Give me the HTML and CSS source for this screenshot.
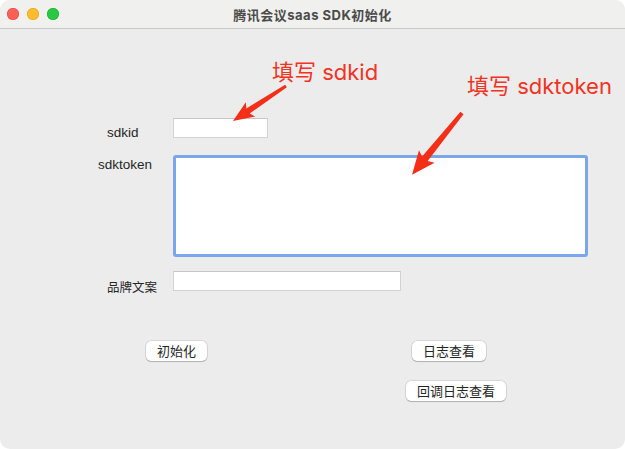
FILE: index.html
```html
<!DOCTYPE html>
<html lang="zh">
<head>
<meta charset="utf-8">
<title>腾讯会议saas SDK初始化</title>
<link rel="stylesheet" href="styles.css">
</head>
<body>
<div class="window">
  <header class="titlebar">
    <div class="lights">
      <span class="light light-close"></span>
      <span class="light light-min"></span>
      <span class="light light-max"></span>
    </div>
    <div class="title">腾讯会议saas SDK初始化</div>
    <div class="spacer"></div>
  </header>
  <main class="form">
    <div class="row row-id">
      <label class="label label-id">sdkid</label>
      <input class="field field-id" type="text">
    </div>
    <div class="row row-token">
      <label class="label label-token">sdktoken</label>
      <textarea class="area"></textarea>
    </div>
    <div class="row row-brand">
      <label class="label label-brand">品牌文案</label>
      <input class="field field-brand" type="text">
    </div>
    <div class="buttons buttons-main">
      <button class="btn">初始化</button>
      <button class="btn btn-log">日志查看</button>
    </div>
    <div class="buttons buttons-cb">
      <button class="btn">回调日志查看</button>
    </div>
  </main>
  <div class="note note-id">填写 sdkid</div>
  <div class="note note-token">填写 sdktoken</div>
  <svg class="arrows" width="625" height="449" viewBox="0 0 625 449">
    <path class="arrow" transform="translate(286 86) rotate(146.6)" d="M0,-1.6 L45.5,-3 L42.5,-8.5 L63.5,0 L42.5,8.5 L45.5,3 L0,1.6 Z"/>
    <path class="arrow" transform="translate(462 113) rotate(129)" d="M0,-2 L59,-3.6 L56,-10 L79.4,0 L56,10 L59,3.6 L0,2 Z"/>
  </svg>
</div>
</body>
</html>
```

FILE: styles.css
```css
* { box-sizing: border-box; }

html, body {
  margin: 0;
  padding: 0;
  background: #ffffff;
}

.window {
  position: relative;
  width: 625px;
  height: 449px;
  border-radius: 10px;
  background: #ececec;
  overflow: hidden;
  font-family: "Liberation Sans", "Noto Sans CJK SC", sans-serif;
  color: #262626;
}

.titlebar {
  height: 29px;
  display: grid;
  grid-template-columns: 1fr auto 1fr;
  align-items: center;
  background: #f0f0ee;
  border-bottom: 1px solid #c8c8c8;
}

.lights {
  display: flex;
  gap: 8px;
  padding-left: 7px;
}

.light {
  width: 12px;
  height: 12px;
  border-radius: 50%;
}
.light-close { background: #fe5f57; box-shadow: inset 0 0 0 0.5px #e2463f; }
.light-min { background: #febc2e; box-shadow: inset 0 0 0 0.5px #e1a116; }
.light-max { background: #28c840; box-shadow: inset 0 0 0 0.5px #1aab29; }

.title {
  font-family: "Inter", "Noto Sans CJK SC", sans-serif;
  font-weight: 700;
  font-size: 13px;
  letter-spacing: 0.5px;
  color: #4b4b4b;
}

.form {
  padding-top: 89px;
}

.row {
  display: flex;
  align-items: flex-start;
}

.row-token { margin-top: 17px; }
.row-brand { margin-top: 14px; }

.label {
  width: 173px;
  height: 20px;
  font-size: 13.5px;
  line-height: 16px;
  color: #262626;
  white-space: nowrap;
}
.label-id { padding-left: 107px; padding-top: 7px; }
.label-token { padding-left: 98px; padding-top: 2px; }
.label-brand { padding-left: 107px; padding-top: 8px; font-family: "Noto Sans CJK SC", sans-serif; font-size: 12.5px; }

.field {
  height: 20px;
  margin: 0;
  padding: 0 3px;
  background: #ffffff;
  border: 1px solid #d3d3d3;
  border-top-color: #c6c6c6;
  border-radius: 0;
  outline: none;
  font-size: 13px;
}
.field-id { width: 95px; }
.field-brand { width: 228px; }

.area {
  display: block;
  width: 415px;
  height: 102px;
  margin: 0;
  resize: none;
  background: #ffffff;
  border: 3px solid #7ca5ec;
  border-radius: 3px;
  outline: none;
}

.buttons {
  display: flex;
}
.buttons-main {
  margin-top: 50px;
  padding-left: 146px;
}
.buttons-cb {
  margin-top: 20px;
  padding-left: 406px;
}

.btn {
  height: 20px;
  margin: 0;
  padding: 0 11px;
  background: #ffffff;
  border: none;
  border-radius: 5px;
  box-shadow: 0 0 0 0.5px rgba(0, 0, 0, 0.18), 0 1px 1px rgba(0, 0, 0, 0.18);
  font-family: "Noto Sans CJK SC", sans-serif;
  font-size: 13px;
  line-height: 20px;
  color: #262626;
}
.btn-log { margin-left: 205px; }

.note {
  position: absolute;
  font-family: "Inter", "Noto Sans CJK SC", sans-serif;
  font-size: 22px;
  line-height: 26px;
  color: #f2331f;
  white-space: nowrap;
}
.note-id { left: 272px; top: 59px; }
.note-token { left: 467px; top: 73px; }

.arrows {
  position: absolute;
  left: 0;
  top: 0;
  pointer-events: none;
}
.arrow {
  fill: #f52e18;
}
```
